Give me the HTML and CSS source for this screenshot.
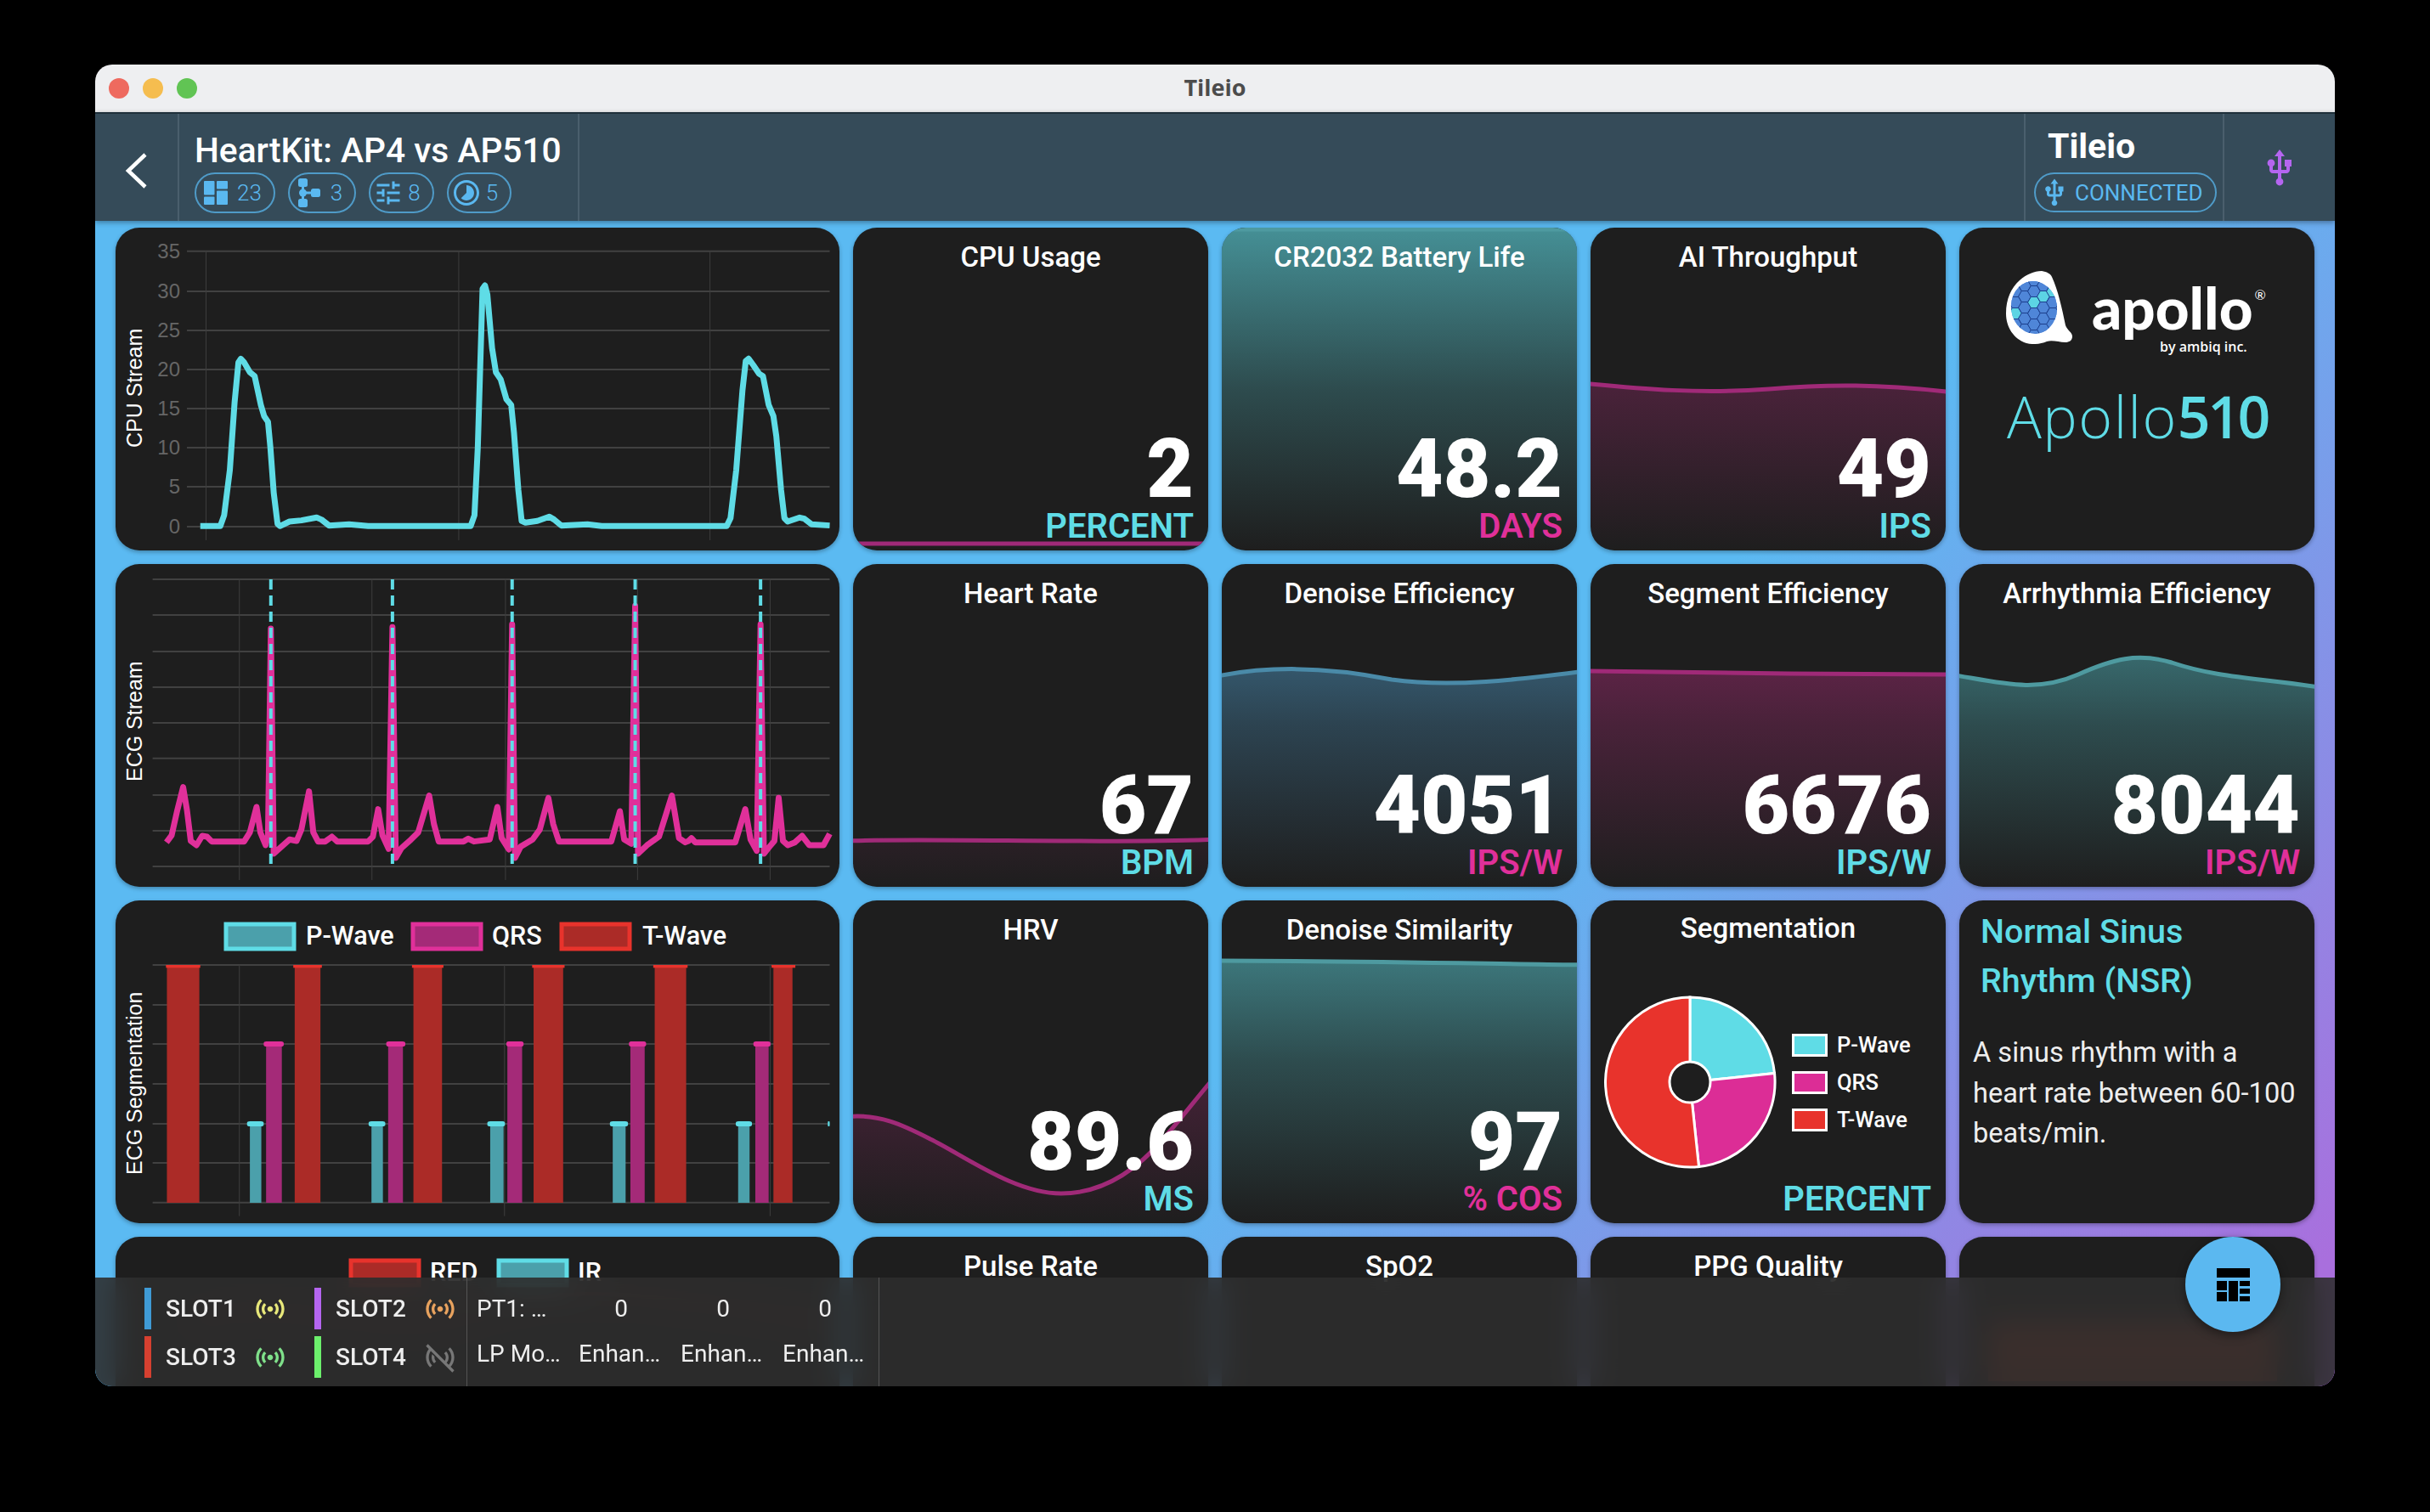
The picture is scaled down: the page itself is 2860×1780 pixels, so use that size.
FILE: index.html
```html
<!DOCTYPE html>
<html lang="en">
<head>
    <meta charset="UTF-8">
    <title>Tileio</title>
    <link rel="stylesheet" href="styles.css">
</head>
<body>
<svg class="defs" aria-hidden="true">
    <defs>
        <linearGradient id="fillCyan" gradientUnits="userSpaceOnUse" x1="0" y1="0" x2="0" y2="380">
            <stop offset="0" stop-color="#5fdce6" stop-opacity=".6"/>
            <stop offset=".5" stop-color="#5fdce6" stop-opacity=".24"/>
            <stop offset="1" stop-color="#5fdce6" stop-opacity="0"/>
        </linearGradient>
        <linearGradient id="fillBlue" gradientUnits="userSpaceOnUse" x1="0" y1="0" x2="0" y2="380">
            <stop offset="0" stop-color="#5ab8f0" stop-opacity=".6"/>
            <stop offset=".5" stop-color="#5ab8f0" stop-opacity=".24"/>
            <stop offset="1" stop-color="#5ab8f0" stop-opacity="0"/>
        </linearGradient>
        <linearGradient id="fillPink" gradientUnits="userSpaceOnUse" x1="0" y1="0" x2="0" y2="380">
            <stop offset="0" stop-color="#e0309a" stop-opacity=".5"/>
            <stop offset=".5" stop-color="#e0309a" stop-opacity=".22"/>
            <stop offset="1" stop-color="#e0309a" stop-opacity="0"/>
        </linearGradient>
        <symbol id="i-usb" viewBox="0 0 24 24"><path d="M15 7v4h1v2h-3V5h2l-3-4-3 4h2v8H8v-2.07c.7-.37 1.2-1.08 1.2-1.93 0-1.21-.99-2.2-2.2-2.2-1.21 0-2.2.99-2.2 2.2 0 .85.5 1.56 1.2 1.93V13c0 1.11.89 2 2 2h3v3.05c-.71.37-1.2 1.1-1.2 1.95 0 1.22.99 2.2 2.2 2.2 1.21 0 2.2-.98 2.2-2.2 0-.85-.49-1.58-1.2-1.95V15h3c1.11 0 2-.89 2-2v-2h1V7h-4z"/></symbol>
        <symbol id="i-sensor" viewBox="0 0 24 24"><path d="M7.76 16.24C6.67 15.16 6 13.66 6 12s.67-3.16 1.76-4.24l1.42 1.42C8.45 9.9 8 10.9 8 12c0 1.1.45 2.1 1.17 2.83l-1.41 1.41zm8.48 0C17.33 15.16 18 13.66 18 12s-.67-3.16-1.76-4.24l-1.42 1.42C15.55 9.9 16 10.9 16 12c0 1.1-.45 2.1-1.17 2.83l1.41 1.41zM12 10c-1.1 0-2 .9-2 2s.9 2 2 2 2-.9 2-2-.9-2-2-2zm8 2c0 2.21-.9 4.21-2.35 5.65l1.42 1.42C20.88 17.26 22 14.76 22 12s-1.12-5.26-2.93-7.07l-1.42 1.42C19.1 7.79 20 9.79 20 12zM6.35 6.35L4.93 4.93C3.12 6.74 2 9.24 2 12s1.12 5.26 2.93 7.07l1.42-1.42C4.9 16.21 4 14.21 4 12s.9-4.21 2.35-5.65z"/></symbol>
        <symbol id="i-sensor-off" viewBox="0 0 24 24"><path d="M16.24 16.24C17.33 15.16 18 13.66 18 12s-.67-3.16-1.76-4.24l-1.42 1.42C15.55 9.9 16 10.9 16 12c0 .8-.24 1.55-.65 2.18zM20 12c0 2.21-.9 4.21-2.35 5.65l1.42 1.42C20.88 17.26 22 14.76 22 12s-1.12-5.26-2.93-7.07l-1.42 1.42C19.1 7.79 20 9.79 20 12zM6.35 6.35L4.93 4.93C3.12 6.74 2 9.24 2 12s1.12 5.26 2.93 7.07l1.42-1.42C4.9 16.21 4 14.21 4 12s.9-4.21 2.35-5.65zM7.76 16.24C6.67 15.16 6 13.66 6 12c0-.8.16-1.56.44-2.26l1.6 1.6C8.01 11.55 8 11.77 8 12c0 1.1.45 2.1 1.17 2.83zM3.4 2.6 2 4l18.6 18.6 1.4-1.4z"/></symbol>
    </defs>
</svg>

<div class="window">
    <div class="titlebar">
        <div class="traffic">
            <span class="dot dot-red"></span>
            <span class="dot dot-yellow"></span>
            <span class="dot dot-green"></span>
        </div>
        <div class="window-title">Tileio</div>
    </div>

    <header class="appbar">
        <div class="back-cell">
            <svg class="back-icon" viewBox="0 0 26 42"><path d="M24 2 4 21l20 19"/></svg>
        </div>
        <div class="title-cell">
            <h1 class="dash-title">HeartKit: AP4 vs AP510</h1>
            <div class="chips">
                <span class="chip">
                    <svg viewBox="0 0 28 28"><rect x="0" y="0" width="12.5" height="16.5" rx="1"/><rect x="0" y="18.5" width="12.5" height="9.5" rx="1"/><rect x="15" y="0" width="13" height="9.5" rx="1"/><rect x="15" y="11.5" width="13" height="16.5" rx="1"/></svg>
                    23
                </span>
                <span class="chip">
                    <svg class="icon-tree" viewBox="0 0 28 34"><rect x="1" y="0" width="11" height="10" rx="2.5"/><rect x="1" y="24" width="11" height="10" rx="2.5"/><rect x="16" y="12" width="11" height="10" rx="2.5"/><path d="M5 8h3v18H5z"/><path d="M6 15.5h11v3H6z"/><circle cx="6.5" cy="17" r="4.5"/></svg>
                    3
                </span>
                <span class="chip">
                    <svg class="icon-wide" viewBox="0 0 24 24"><path d="M3 17v2h6v-2H3zM3 5v2h10V5H3zm10 16v-2h8v-2h-8v-2h-2v6h2zM7 9v2H3v2h4v2h2V9H7zm14 4v-2H11v2h10zm-6-4h2V7h4V5h-4V3h-2v6z"/></svg>
                    8
                </span>
                <span class="chip">
                    <svg class="icon-wide" viewBox="0 0 24 24"><path d="M16.24 7.76C15.07 6.59 13.54 6 12 6v6l-4.24 4.24c2.34 2.34 6.14 2.34 8.49 0 2.34-2.34 2.34-6.14-.01-8.48zM12 2C6.48 2 2 6.48 2 12s4.48 10 10 10 10-4.48 10-10S17.52 2 12 2zm0 18c-4.42 0-8-3.58-8-8s3.58-8 8-8 8 3.58 8 8-3.58 8-8 8z"/></svg>
                    5
                </span>
            </div>
        </div>
        <div class="appbar-space"></div>
        <div class="device-cell">
            <div class="device-name">Tileio</div>
            <span class="chip chip-status">
                <svg class="icon-wide"><use href="#i-usb"/></svg>
                CONNECTED
            </span>
        </div>
        <div class="usb-cell">
            <svg class="usb-icon"><use href="#i-usb"/></svg>
        </div>
    </header>

    <main class="board">
        <!-- row 1 -->
        <section class="card wide">
            <svg class="chart" viewBox="0 0 852 380">
                <text class="axis-title" transform="translate(31 259) rotate(-90)">CPU Stream</text>
                <g class="ticks">
                    <text x="76" y="36">35</text>
                    <text x="76" y="83">30</text>
                    <text x="76" y="129">25</text>
                    <text x="76" y="175">20</text>
                    <text x="76" y="221">15</text>
                    <text x="76" y="267">10</text>
                    <text x="76" y="313">5</text>
                    <text x="76" y="360">0</text>
                </g>
                <g transform="translate(-17 -8) scale(.5612 .3333)">
                    <path class="grid" d="M180 107H1528M180 249H1528M180 387H1528M180 525H1528M180 663H1528M180 801H1528M180 939H1528M180 1080H1528"/>
                    <path class="grid-v" d="M220 107V1128M750 107V1128M1277 107V1128"/>
                    <polyline class="trace trace-cyan" points="208,1078 250,1078 258,1040 270,880 280,640 288,500 293,487 300,500 312,535 322,548 335,650 342,690 350,710 355,800 362,960 370,1070 375,1078 395,1062 420,1058 452,1048 462,1055 478,1076 520,1072 560,1078 775,1078 783,1040 790,800 800,240 805,228 810,260 820,450 828,535 838,560 850,630 860,650 866,750 875,950 882,1060 890,1066 915,1060 940,1045 950,1055 965,1076 1020,1072 1050,1078 1312,1078 1320,1050 1332,880 1345,600 1352,495 1358,487 1368,510 1380,540 1388,548 1400,650 1410,690 1416,760 1426,950 1433,1050 1440,1062 1465,1048 1475,1052 1490,1072 1528,1076"/>
                </g>
            </svg>
        </section>

        <section class="card">
            <svg class="wave" viewBox="0 0 418 380"><path class="wave-pink" d="M-10 372H428V390H-10Z"/></svg>
            <h2 class="card-title">CPU Usage</h2>
            <div class="stat"><div class="stat-value">2</div><div class="stat-unit unit-cyan">PERCENT</div></div>
        </section>

        <section class="card">
            <svg class="wave" viewBox="0 0 418 380"><path class="wave-cyan" d="M-10 2H428V390H-10Z"/></svg>
            <h2 class="card-title">CR2032 Battery Life</h2>
            <div class="stat"><div class="stat-value">48.2</div><div class="stat-unit unit-pink">DAYS</div></div>
        </section>

        <section class="card">
            <svg class="wave" viewBox="0 0 418 380"><path class="wave-pink" d="M-10 183C60 190 130 196 210 190 280 184 340 184 428 194V390H-10Z"/></svg>
            <h2 class="card-title">AI Throughput</h2>
            <div class="stat"><div class="stat-value">49</div><div class="stat-unit unit-cyan">IPS</div></div>
        </section>

        <section class="card logo-card">
            <div class="logo-row">
                <svg class="logo-mark" viewBox="0 0 78 86">
                    <defs>
                        <clipPath id="eggClip"><ellipse cx="33" cy="43" rx="27" ry="31" transform="rotate(-8 33 43)"/></clipPath>
                        <polygon id="hex" points="-7.5,0 -3.7,-6.5 3.7,-6.5 7.5,0 3.7,6.5 -3.7,6.5"/>
                    </defs>
                    <path fill="#fff" d="M42 0C48 1 52 3 54 7 61 22 66 44 70 64 72 70 78 72 78 77 78 82 74 84 70 84 62 84 55 81 48 83 41 86 32 87 24 85 9 80 0 66 0 50 0 33 6 20 16 11 24 4 33 0 42 0Z"/>
                    <g clip-path="url(#eggClip)">
                        <rect x="0" y="5" width="70" height="75" fill="#4f86d8"/>
                        <g class="hexes">
                            <use href="#hex" x="11" y="24"/><use href="#hex" x="11" y="37"/><use href="#hex" x="11" y="50" fill="#5cd4e4"/><use href="#hex" x="11" y="63"/>
                            <use href="#hex" x="22" y="17"/><use href="#hex" x="22" y="30"/><use href="#hex" x="22" y="43"/><use href="#hex" x="22" y="56"/><use href="#hex" x="22" y="69"/>
                            <use href="#hex" x="33" y="11"/><use href="#hex" x="33" y="24"/><use href="#hex" x="33" y="37" fill="#5cd4e4"/><use href="#hex" x="33" y="50"/><use href="#hex" x="33" y="63"/>
                            <use href="#hex" x="44" y="17"/><use href="#hex" x="44" y="30" fill="#5cd4e4"/><use href="#hex" x="44" y="43"/><use href="#hex" x="44" y="56"/><use href="#hex" x="44" y="69"/>
                            <use href="#hex" x="55" y="24" fill="#5cd4e4"/><use href="#hex" x="55" y="37"/><use href="#hex" x="55" y="50"/>
                        </g>
                    </g>
                </svg>
                <div class="wordmark">
                    <div class="wordmark-name">apollo<span class="wordmark-reg">®</span></div>
                    <div class="wordmark-by">by ambiq inc.</div>
                </div>
            </div>
            <div class="model-name">Apollo<b>510</b></div>
        </section>

        <!-- row 2 -->
        <section class="card wide">
            <svg class="chart" viewBox="0 0 852 380">
                <text class="axis-title" transform="translate(31 256) rotate(-90)">ECG Stream</text>
                <g transform="translate(-17 -4) scale(.5612 .3333)">
                    <path class="grid" d="M108 66H1528M108 192H1528M108 321H1528M108 447H1528M108 573H1528M108 698H1528M108 828H1528M108 954H1528M108 1080H1528"/>
                    <path class="grid-v" d="M290 66V1128M568 66V1128M848 66V1128M1125 66V1128M1403 66V1128"/>
                    <polyline class="trace trace-pink" points="137,995 148,970 160,880 172,800 180,880 188,990 200,1005 212,972 222,975 232,992 300,992 312,960 326,870 334,960 345,1005 350,970 356,240 362,1035 375,1015 395,985 410,990 420,950 436,815 445,960 455,992 470,992 484,975 495,992 560,992 570,975 581,878 590,970 603,1018 611,235 618,1050 630,1015 650,985 665,960 688,830 698,930 708,992 760,992 770,982 782,992 815,985 831,870 840,980 855,1020 862,225 868,1050 880,1010 905,985 920,950 938,838 948,930 960,992 1070,992 1088,885 1097,985 1112,1000 1120,160 1126,1035 1145,1005 1170,975 1197,830 1212,980 1225,995 1232,990 1238,980 1246,995 1330,995 1351,878 1362,985 1375,1025 1383,225 1390,1035 1402,1010 1412,990 1421,838 1430,990 1440,1005 1455,995 1470,972 1485,1005 1515,1005 1528,965"/>
                    <path class="beat" d="M356 66V1080M611 66V1080M862 66V1080M1120 66V1080M1383 66V1080"/>
                </g>
            </svg>
        </section>

        <section class="card">
            <svg class="wave" viewBox="0 0 418 380"><path class="wave-pink" d="M-10 326C100 322 300 330 428 324V390H-10Z"/></svg>
            <h2 class="card-title">Heart Rate</h2>
            <div class="stat"><div class="stat-value">67</div><div class="stat-unit unit-cyan">BPM</div></div>
        </section>

        <section class="card">
            <svg class="wave" viewBox="0 0 418 380"><path class="wave-blue" d="M-10 133C60 118 130 122 200 136 270 146 350 136 428 126V390H-10Z"/></svg>
            <h2 class="card-title">Denoise Efficiency</h2>
            <div class="stat"><div class="stat-value">4051</div><div class="stat-unit unit-pink">IPS/W</div></div>
        </section>

        <section class="card">
            <svg class="wave" viewBox="0 0 418 380"><path class="wave-pink" d="M-10 126C140 128 280 130 428 130V390H-10Z"/></svg>
            <h2 class="card-title">Segment Efficiency</h2>
            <div class="stat"><div class="stat-value">6676</div><div class="stat-unit unit-cyan">IPS/W</div></div>
        </section>

        <section class="card">
            <svg class="wave" viewBox="0 0 418 380"><path class="wave-cyan" d="M-10 130C50 140 90 152 140 130 180 112 210 104 250 116 310 136 360 134 428 146V390H-10Z"/></svg>
            <h2 class="card-title">Arrhythmia Efficiency</h2>
            <div class="stat"><div class="stat-value">8044</div><div class="stat-unit unit-pink">IPS/W</div></div>
        </section>

        <!-- row 3 -->
        <section class="card wide">
            <svg class="chart" viewBox="0 0 852 380">
                <text class="axis-title" transform="translate(31 323) rotate(-90)">ECG Segmentation</text>
                <g class="legend">
                    <rect class="swatch swatch-cyan" x="130" y="28" width="80" height="29"/>
                    <text x="224" y="52">P-Wave</text>
                    <rect class="swatch swatch-pink" x="350" y="28" width="80" height="29"/>
                    <text x="443" y="52">QRS</text>
                    <rect class="swatch swatch-red" x="525" y="28" width="80" height="29"/>
                    <text x="620" y="52">T-Wave</text>
                </g>
                <g transform="translate(-17 -10) scale(.5612 .3333)">
                    <path class="grid" d="M108 258H1528M108 399H1528M108 537H1528M108 678H1528M108 819H1528M108 957H1528M108 1097H1528"/>
                    <path class="grid-v" d="M290 258V1145M846 258V1145M1403 258V1145"/>
                    <g class="bars-red">
                        <rect x="138" y="258" width="68" height="840"/><rect x="406" y="258" width="54" height="840"/><rect x="655" y="258" width="60" height="840"/><rect x="907" y="258" width="62" height="840"/><rect x="1161" y="258" width="66" height="840"/><rect x="1410" y="258" width="40" height="840"/>
                    </g>
                    <g class="caps-red">
                        <rect x="136" y="258" width="72" height="10"/><rect x="403" y="258" width="60" height="10"/><rect x="652" y="258" width="66" height="10"/><rect x="904" y="258" width="68" height="10"/><rect x="1158" y="258" width="72" height="10"/><rect x="1406" y="258" width="50" height="10"/>
                    </g>
                    <g class="bars-pink">
                        <rect x="346" y="528" width="33" height="570"/><rect x="602" y="528" width="31" height="570"/><rect x="852" y="528" width="31" height="570"/><rect x="1110" y="528" width="30" height="570"/><rect x="1372" y="528" width="28" height="570"/>
                    </g>
                    <g class="caps-pink">
                        <rect x="341" y="528" width="42" height="18" rx="6"/><rect x="598" y="528" width="40" height="18" rx="6"/><rect x="850" y="528" width="36" height="18" rx="6"/><rect x="1107" y="528" width="36" height="18" rx="6"/><rect x="1368" y="528" width="36" height="18" rx="6"/>
                    </g>
                    <g class="bars-cyan">
                        <rect x="312" y="810" width="24" height="288"/><rect x="567" y="810" width="24" height="288"/><rect x="816" y="810" width="28" height="288"/><rect x="1073" y="810" width="27" height="288"/><rect x="1336" y="810" width="24" height="288"/>
                    </g>
                    <g class="caps-cyan">
                        <rect x="306" y="810" width="35" height="18" rx="6"/><rect x="561" y="810" width="35" height="18" rx="6"/><rect x="810" y="810" width="37" height="18" rx="6"/><rect x="1067" y="810" width="38" height="18" rx="6"/><rect x="1331" y="810" width="34" height="18" rx="6"/><rect x="1524" y="810" width="4" height="18" rx="2"/>
                    </g>
                </g>
            </svg>
        </section>

        <section class="card">
            <svg class="wave" viewBox="0 0 418 380"><path class="wave-pink" d="M-10 255C30 250 60 265 91 281 130 300 190 345 245 345 300 345 340 310 365 281 385 258 405 232 428 205V390H-10Z"/></svg>
            <h2 class="card-title">HRV</h2>
            <div class="stat"><div class="stat-value">89.6</div><div class="stat-unit unit-cyan">MS</div></div>
        </section>

        <section class="card">
            <svg class="wave" viewBox="0 0 418 380"><path class="wave-cyan" d="M-10 71C140 71 280 74 428 76V390H-10Z"/></svg>
            <h2 class="card-title">Denoise Similarity</h2>
            <div class="stat"><div class="stat-value">97</div><div class="stat-unit unit-pink">% COS</div></div>
        </section>

        <section class="card">
            <h2 class="card-title title-up">Segmentation</h2>
            <div class="pie-row">
                <svg class="pie" viewBox="0 0 210 210">
                    <path fill="#5fdce6" d="M105 105V5A100 100 0 0 1 204.5 94.5Z"/>
                    <path fill="#dc2d96" d="M105 105 204.5 94.5A100 100 0 0 1 115.5 204.5Z"/>
                    <path fill="#e8332c" d="M105 105 115.5 204.5A100 100 0 1 1 105 5Z"/>
                    <circle class="pie-hole" cx="105" cy="105" r="24"/>
                </svg>
                <ul class="pie-legend">
                    <li><span class="pie-key key-cyan"></span>P-Wave</li>
                    <li><span class="pie-key key-pink"></span>QRS</li>
                    <li><span class="pie-key key-red"></span>T-Wave</li>
                </ul>
            </div>
            <div class="stat"><div class="stat-unit unit-cyan">PERCENT</div></div>
        </section>

        <section class="card note-card">
            <h3 class="note-title">Normal Sinus Rhythm (NSR)</h3>
            <p class="note-body">A sinus rhythm with a heart rate between 60-100 beats/min.</p>
        </section>

        <!-- row 4, mostly under the bottom bar -->
        <section class="card wide">
            <svg class="chart" viewBox="0 0 852 380">
                <g class="legend">
                    <rect class="swatch swatch-red" x="277" y="28" width="80" height="29"/>
                    <text x="370" y="52">RED</text>
                    <rect class="swatch swatch-cyan" x="451" y="28" width="80" height="29"/>
                    <text x="544" y="52">IR</text>
                </g>
                <path class="ghost-red" d="M90 100C200 60 300 130 420 90S640 70 840 100"/>
            </svg>
        </section>
        <section class="card"><h2 class="card-title">Pulse Rate</h2></section>
        <section class="card"><h2 class="card-title">SpO2</h2></section>
        <section class="card"><h2 class="card-title">PPG Quality</h2></section>
        <section class="card"><div class="ghost-label"></div></section>
    </main>

    <footer class="slotbar">
        <div class="slots">
            <div class="slot">
                <span class="slot-bar bar-blue"></span>
                <span class="slot-name">SLOT1</span>
                <svg class="slot-icon icon-yellow"><use href="#i-sensor"/></svg>
            </div>
            <div class="slot">
                <span class="slot-bar bar-purple"></span>
                <span class="slot-name">SLOT2</span>
                <svg class="slot-icon icon-orange"><use href="#i-sensor"/></svg>
            </div>
            <div class="slot">
                <span class="slot-bar bar-red"></span>
                <span class="slot-name">SLOT3</span>
                <svg class="slot-icon icon-green"><use href="#i-sensor"/></svg>
            </div>
            <div class="slot">
                <span class="slot-bar bar-green"></span>
                <span class="slot-name">SLOT4</span>
                <svg class="slot-icon icon-gray"><use href="#i-sensor-off"/></svg>
            </div>
        </div>
        <div class="modes">
            <span>PT1: …</span><span class="mode-num">0</span><span class="mode-num">0</span><span class="mode-num">0</span>
            <span>LP Mo…</span><span>Enhan…</span><span>Enhan…</span><span>Enhan…</span>
        </div>
    </footer>

    <button class="fab" aria-label="Layout">
        <svg viewBox="0 0 39 39">
            <rect x="0" y="0" width="39" height="11"/>
            <rect x="0" y="15" width="12" height="11"/>
            <rect x="0" y="28" width="12" height="11"/>
            <rect x="14" y="15" width="11" height="24"/>
            <rect x="27" y="15" width="12" height="6"/>
            <rect x="27" y="24" width="12" height="6"/>
            <rect x="27" y="33" width="12" height="6"/>
        </svg>
    </button>
</div>
</body>
</html>
```

FILE: styles.css
```css
* {
    box-sizing: border-box;
}
html, body {
    height: 100%;
}
body {
    margin: 0;
    padding: 76px 112px 148px;
    background-color: #000;
    font-family: Roboto, "Liberation Sans", sans-serif;
    color: #fff;
    overflow: hidden;
}
.defs {
    position: absolute;
    width: 0;
    height: 0;
}
.window {
    position: relative;
    display: flex;
    flex-direction: column;
    width: 2636px;
    height: 1556px;
    border-radius: 20px;
    overflow: hidden;
}

/* mac title bar */
.titlebar {
    position: relative;
    flex: none;
    display: flex;
    align-items: center;
    justify-content: center;
    height: 56px;
    padding-bottom: 3px;
    background-color: #eeeff1;
}
.traffic {
    position: absolute;
    top: 16px;
    left: 16px;
    display: flex;
    gap: 16px;
}
.dot {
    width: 24px;
    height: 24px;
    border-radius: 50%;
}
.dot-red { background-color: #ee6a5f; }
.dot-yellow { background-color: #f5bd4f; }
.dot-green { background-color: #61c454; }
.window-title {
    font-family: "Open Sans", sans-serif;
    font-size: 27px;
    font-weight: 700;
    color: #4c4c4c;
}

/* app bar */
.appbar {
    flex: none;
    display: flex;
    height: 128px;
    background-color: #354b59;
    border-top: 2px solid #1f303b;
    box-shadow: 0 2px 6px rgba(0, 0, 0, .35);
    z-index: 2;
}
.back-cell {
    display: flex;
    align-items: center;
    justify-content: center;
    width: 97px;
    padding: 8px 1px 0 0;
}
.back-icon {
    width: 26px;
    height: 42px;
    fill: none;
    stroke: #fff;
    stroke-width: 4.5;
}
.title-cell {
    width: 473px;
    padding: 20px 0 0 18px;
    border-left: 2px solid #4a5f6d;
    border-right: 2px solid #4a5f6d;
}
.dash-title {
    margin: 0;
    font-size: 40.7px;
    font-weight: 500;
    line-height: 46px;
}
.chips {
    display: flex;
    gap: 15px;
    margin-top: 3px;
}
.chip {
    display: inline-flex;
    align-items: center;
    gap: 11px;
    height: 48px;
    padding: 0 14px 0 9px;
    border: 2px solid #4f9bc8;
    border-radius: 24px;
    font-size: 26px;
    font-weight: 300;
    color: #5ab8f0;
}
.chip svg {
    width: 28px;
    height: 28px;
    fill: #5ab8f0;
}
.chip .icon-wide {
    width: 36px;
    height: 36px;
    margin: 0 -6px;
}
.chip .icon-tree {
    height: 34px;
}
.appbar-space {
    flex: 1;
}
.device-cell {
    display: flex;
    flex-direction: column;
    align-items: flex-start;
    width: 236px;
    padding: 15px 0 0 10px;
    border-left: 2px solid #4a5f6d;
    border-right: 2px solid #4a5f6d;
}
.device-name {
    margin-left: 16px;
    font-size: 41px;
    font-weight: 700;
    line-height: 46px;
}
.chip-status {
    height: 47px;
    margin-top: 8px;
    padding: 0 14px 0 10px;
    gap: 12px;
    font-weight: 400;
}
.usb-cell {
    flex: none;
    display: flex;
    align-items: center;
    justify-content: center;
    width: 130px;
    padding-top: 2px;
}
.usb-icon {
    width: 48px;
    height: 48px;
    fill: #b565f0;
}

/* tile board */
.board {
    flex: 1;
    display: grid;
    grid-template-columns: repeat(6, 418px);
    grid-auto-rows: 380px;
    gap: 16px;
    padding: 8px 24px;
    overflow: hidden;
    background: linear-gradient(135deg, #5bbaf2 58%, #a96fdd 96%);
}
.card {
    position: relative;
    display: flex;
    flex-direction: column;
    border-radius: 28px;
    background-color: #1e1e1e;
    box-shadow: 0 2px 5px rgba(0, 0, 0, .3);
    overflow: hidden;
}
.wide {
    grid-column: span 2;
}
.card-title {
    position: relative;
    margin: 15px 0 0;
    font-size: 33px;
    font-weight: 500;
    line-height: 40px;
    text-align: center;
}
.title-up {
    margin-top: 13px;
}
.wave {
    position: absolute;
    top: 0;
    left: 0;
    width: 100%;
    height: 100%;
}
.wave path {
    stroke-width: 5;
}
.wave-pink { fill: url(#fillPink); stroke: #a02a78; }
.wave-cyan { fill: url(#fillCyan); stroke: #4e9aa0; }
.wave-blue { fill: url(#fillBlue); stroke: #4a8aa8; }
.stat {
    position: relative;
    margin-top: auto;
    padding: 0 17px 5px 0;
    text-align: right;
}
.stat-value {
    font-size: 96px;
    font-weight: 900;
    line-height: 90px;
}
.stat-unit {
    font-size: 40px;
    font-weight: 600;
    line-height: 46px;
}
.unit-cyan { color: #5fdce6; }
.unit-pink { color: #e0309a; }

/* svg charts */
.chart {
    width: 100%;
    height: 100%;
}
.axis-title {
    font-family: "Liberation Sans", sans-serif;
    font-size: 25px;
    fill: #fff;
}
.ticks text {
    font-family: "Liberation Sans", sans-serif;
    font-size: 24px;
    fill: #666;
    text-anchor: end;
}
.grid, .grid-v, .trace, .beat {
    fill: none;
    vector-effect: non-scaling-stroke;
}
.grid {
    stroke: #414141;
    stroke-width: 2;
}
.grid-v {
    stroke: #3e3e3e;
    stroke-width: 1;
}
.trace {
    stroke-width: 7;
    stroke-linejoin: round;
}
.trace-cyan { stroke: #5fdce6; }
.trace-pink { stroke: #e0309a; }
.beat {
    stroke: #5fdce6;
    stroke-width: 4;
    stroke-dasharray: 12 7;
}
.legend text {
    font-size: 30.5px;
    font-weight: 500;
    fill: #fff;
}
.swatch {
    stroke-width: 5;
}
.swatch-cyan { fill: #4ba0ab; stroke: #5fdce6; }
.swatch-pink { fill: #a42a78; stroke: #e0309a; }
.swatch-red { fill: #ab2b27; stroke: #e8332c; }
.bars-red { fill: #ab2b27; }
.caps-red { fill: #e8332c; }
.bars-pink { fill: #a42a78; }
.caps-pink { fill: #e0309a; }
.bars-cyan { fill: #4ba0ab; }
.caps-cyan { fill: #5fdce6; }
.ghost-red {
    fill: none;
    stroke: #e8332c;
    stroke-width: 5;
    opacity: .5;
}

/* logo tile */
.logo-row {
    display: flex;
    padding: 51px 0 0 55px;
}
.logo-mark {
    flex: none;
    width: 78px;
    height: 86px;
}
.hexes {
    fill: #4f86d8;
    stroke: #1c3f8c;
    stroke-width: 1;
}
.wordmark {
    margin-left: 23px;
    color: #fff;
}
.wordmark-name {
    position: relative;
    font-family: Lato, sans-serif;
    font-size: 69px;
    font-weight: 900;
    line-height: 70px;
    margin-top: 8px;
}
.wordmark-reg {
    position: absolute;
    top: 12px;
    margin-left: 2px;
    font-size: 16px;
    font-weight: 400;
    line-height: 16px;
}
.wordmark-by {
    margin: 0 0 0 80px;
    font-family: "Open Sans", sans-serif;
    font-size: 16px;
    font-weight: 600;
    white-space: nowrap;
}
.model-name {
    margin-top: 29px;
    padding-left: 56px;
    font-family: "Open Sans", sans-serif;
    font-size: 68px;
    font-weight: 300;
    letter-spacing: 1.5px;
    line-height: 84px;
    color: #5fdce6;
}
.model-name b {
    font-weight: 600;
    letter-spacing: -3.5px;
}

/* pie tile */
.pie-row {
    display: flex;
    align-items: center;
    margin-top: 56px;
    padding-left: 12px;
}
.pie {
    flex: none;
    width: 210px;
    height: 210px;
}
.pie path, .pie-hole {
    stroke: #fff;
    stroke-width: 3;
}
.pie-hole {
    fill: #1e1e1e;
}
.pie-legend {
    display: flex;
    flex-direction: column;
    gap: 17px;
    margin: 0 0 0 15px;
    padding: 0;
    list-style: none;
    font-size: 25.5px;
    font-weight: 500;
}
.pie-legend li {
    display: flex;
    align-items: center;
    gap: 11px;
    height: 27px;
}
.pie-key {
    width: 42px;
    height: 27px;
    border: 3px solid #fff;
}
.key-cyan { background-color: #5fdce6; }
.key-pink { background-color: #dc2d96; }
.key-red { background-color: #e8332c; }

/* text tile */
.note-card {
    padding: 8px 16px 0;
}
.note-title {
    margin: 0;
    padding-left: 9px;
    font-size: 39.5px;
    font-weight: 500;
    line-height: 58px;
    color: #5fdce6;
}
.note-body {
    margin: 32px 0 0;
    font-size: 32.6px;
    font-weight: 400;
    line-height: 47.5px;
    color: #eee;
}
.ghost-label {
    width: 340px;
    height: 70px;
    margin: 100px 0 0 34px;
    background-color: #e0452c;
    opacity: .6;
}

/* slot bar over the bottom of the board */
.slotbar {
    position: absolute;
    left: 0;
    right: 0;
    bottom: 0;
    display: flex;
    height: 128px;
    padding-left: 58px;
    background-color: rgba(45, 45, 45, .88);
    backdrop-filter: blur(16px);
    z-index: 3;
}
.slots {
    display: grid;
    grid-template-columns: 200px 179px;
    grid-auto-rows: 49px;
    row-gap: 8px;
    padding-top: 12px;
}
.slot {
    display: flex;
    align-items: center;
}
.slot-bar {
    width: 8px;
    height: 49px;
    margin-right: 17px;
}
.bar-blue { background-color: #3f9bd6; }
.bar-purple { background-color: #b565f0; }
.bar-red { background-color: #d64030; }
.bar-green { background-color: #6cf06c; }
.slot-name {
    width: 102px;
    font-size: 28px;
    font-weight: 500;
    color: #eee;
}
.slot-icon {
    width: 40px;
    height: 40px;
    margin-left: 1px;
}
.icon-yellow { fill: #e8e87a; }
.icon-orange { fill: #e8a25e; }
.icon-green { fill: #7fe08a; }
.icon-gray { fill: #777; }
.modes {
    display: grid;
    grid-template-columns: 100px 100px 100px 100px;
    grid-auto-rows: 53px;
    column-gap: 20px;
    align-items: center;
    align-content: start;
    width: 486px;
    padding: 10px 0 0 11px;
    border-left: 1px solid #555;
    border-right: 1px solid #555;
    font-size: 28px;
    color: #eee;
    white-space: nowrap;
}
.mode-num {
    text-align: center;
}

/* floating button */
.fab {
    position: absolute;
    left: 2460px;
    bottom: 64px;
    display: flex;
    align-items: center;
    justify-content: center;
    width: 112px;
    height: 112px;
    padding: 0;
    border: none;
    border-radius: 50%;
    background-color: #5bb8f0;
    box-shadow: 0 4px 12px rgba(0, 0, 0, .4);
    z-index: 4;
}
.fab svg {
    width: 39px;
    height: 39px;
    fill: #000;
}
```
